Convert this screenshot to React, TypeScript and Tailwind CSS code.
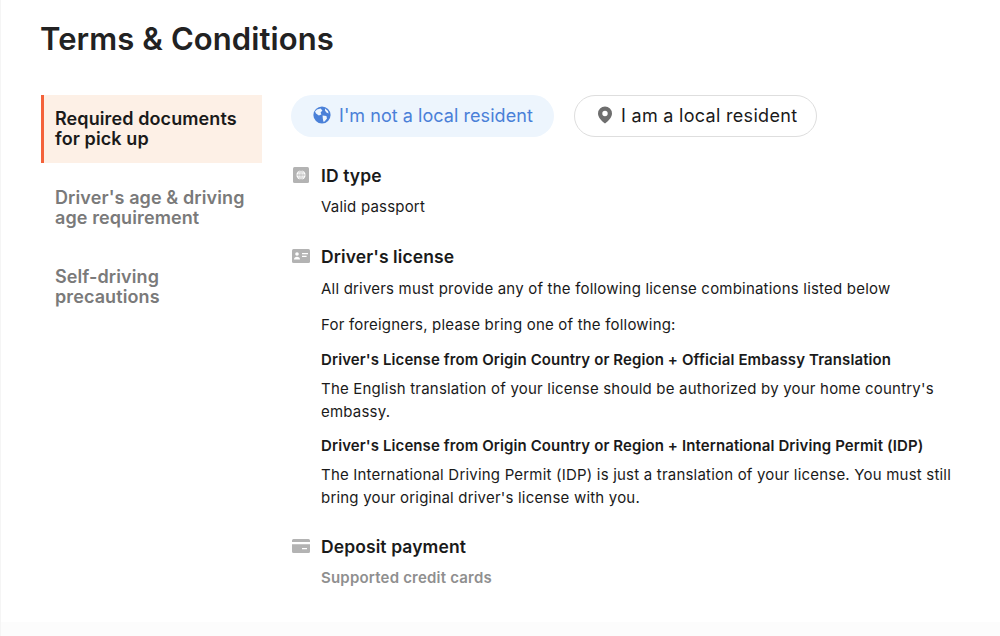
import React from 'react';

const Section: React.FC<{ icon: React.ReactNode; title: string; children?: React.ReactNode }> = ({ icon, title, children }) => (
  <section>
    <div className="flex h-[24px] items-center">
      <span className="flex w-[30px] shrink-0 items-center">{icon}</span>
      <h3 className="text-[17.5px] font-semibold tracking-[0.1px] text-[#1a1a1a]">{title}</h3>
    </div>
    <div className="pl-[30px]">{children}</div>
  </section>
);

const GlobeIcon = () => (
  <svg viewBox="0 0 18 18" className="h-[18px] w-[18px]">
    <circle cx="9" cy="9" r="8.6" fill="#4a80d8" />
    <path d="M4 3.4 7.6 2.6 9.4 4.4 7.6 6.6 8.4 8.4 5.8 9.4 3 7.4 2 5.6ZM9.6 9.4 13.4 10 14 12.4 11.6 15.6 10.4 15.8 9.8 12.6ZM12 2.6 15 5 15.6 7.4 13.4 6.6 12 4.6Z" fill="#edf5fd" />
  </svg>
);

const PinIcon = () => (
  <svg viewBox="0 0 16 18" className="h-[18px] w-[16px]">
    <path fillRule="evenodd" d="M8 0.4a7 7 0 0 1 7 7c0 3.8-3.6 7.4-7 10.2C4.6 14.8 1 11.2 1 7.4a7 7 0 0 1 7-7Zm0 4.4a2.7 2.7 0 1 0 0 5.4 2.7 2.7 0 0 0 0-5.4Z" fill="#6e6e6e" />
  </svg>
);

const IdTypeIcon = () => (
  <svg viewBox="0 0 16 16" className="ml-[2px] h-[16px] w-[16px]">
    <rect width="16" height="16" rx="1.5" fill="#b3b3b3" />
    <circle cx="8" cy="8" r="4.6" fill="#fff" />
    <path d="M3.4 8h9.2M8 3.4v9.200" stroke="#b3b3b3" strokeWidth="0.8" fill="none" />
    <ellipse cx="8" cy="8" rx="2.2" ry="4.600" stroke="#b3b3b3" strokeWidth="0.6" fill="none" />
  </svg>
);

const LicenseIcon = () => (
  <svg viewBox="0 0 18 14" className="ml-[1px] h-[14px] w-[18px]">
    <rect width="18" height="14" rx="1.5" fill="#b3b3b3" />
    <circle cx="5" cy="5" r="1.8" fill="#fff" />
    <path d="M2 10.6c0-1.8 1.4-2.8 3-2.8s3 1 3 2.8Z" fill="#fff" />
    <path d="M10 4.6h6M10 7.4h4.600" stroke="#fff" strokeWidth="1.2" fill="none" />
  </svg>
);

const CardIcon = () => (
  <svg viewBox="0 0 18 14" className="ml-[1px] h-[14px] w-[18px]">
    <path d="M1.5 0h15A1.5 1.5 0 0 1 18 1.5V3H0V1.5A1.5 1.5 0 0 1 1.5 0Z" fill="#b3b3b3" />
    <path fillRule="evenodd" d="M0 5.2h18v7.3a1.5 1.5 0 0 1-1.5 1.5h-15A1.5 1.5 0 0 1 0 12.5Zm10 3.7v1.3h5V8.900Z" fill="#b3b3b3" />
  </svg>
);

const App: React.FC = () => {
  return (
    <div className="h-[636px] w-[1000px] overflow-hidden border-l border-[#f5f5f5] bg-white font-['Inter',sans-serif] text-[#1a1a1a]">
      <div className="h-[622px] pl-[40px]">
        <h1 className="-ml-px pt-[20px] text-[31px] font-semibold leading-[38px] tracking-[0.1px] text-[#222222]">Terms &amp; Conditions</h1>
        <div className="mt-[37px] flex">
          <nav className="w-[221px] shrink-0 text-[18px] font-semibold leading-[20px] tracking-[0.1px]">
            <div className="border-l-[3px] border-[#f4623a] bg-[#fdf0e6] py-[14px] pl-[11px]">Required documents for pick up</div>
            <div className="mt-[25px] pl-[14px] text-[#7a7a7a]">Driver's age &amp; driving age requirement</div>
            <div className="mt-[39px] pl-[14px] text-[#7a7a7a]">Self-driving precautions</div>
          </nav>
          <div className="ml-[29px] w-[665px] text-[15px] leading-[23px] tracking-[0.2px]">
            <div className="flex gap-[20px] text-[18px]">
              <div className="flex h-[42px] w-[263px] items-center gap-[8px] rounded-full bg-[#edf5fd] pb-[2px] pl-[22px] tracking-[0.05px] text-[#4a80d8]">
                <GlobeIcon />
                I'm not a local resident
              </div>
              <div className="flex h-[42px] w-[243px] items-center gap-[8px] rounded-full border border-[#dedede] pb-[2px] pl-[22px] tracking-[0.3px]">
                <PinIcon />
                I am a local resident
              </div>
            </div>

            <div className="mt-[26px]">
              <Section icon={<IdTypeIcon />} title="ID type">
                <p className="mt-[8px]">Valid passport</p>
              </Section>
            </div>

            <div className="mt-[26px]">
              <Section icon={<LicenseIcon />} title="Driver's license">
                <p className="mt-[9px]">All drivers must provide any of the following license combinations listed below</p>
                <p className="mt-[13px]">For foreigners, please bring one of the following:</p>
                <p className="mt-[12px] font-semibold tracking-[0.1px]">Driver's License from Origin Country or Region + Official Embassy Translation</p>
                <p className="mt-[6px]">The English translation of your license should be authorized by your home country's embassy.</p>
                <p className="mt-[11px] font-semibold tracking-[0.1px]">Driver's License from Origin Country or Region + International Driving Permit (IDP)</p>
                <p className="mt-[6px]">The International Driving Permit (IDP) is just a translation of your license. You must still bring your original driver's license with you.</p>
              </Section>
            </div>

            <div className="mt-[25px]">
              <Section icon={<CardIcon />} title="Deposit payment">
                <p className="mt-[8px] font-semibold text-[#8f8f8f]">Supported credit cards</p>
              </Section>
            </div>
          </div>
        </div>
      </div>
      <div className="h-[14px] bg-[#fcfcfc]" />
    </div>
  );
};

export default App;
